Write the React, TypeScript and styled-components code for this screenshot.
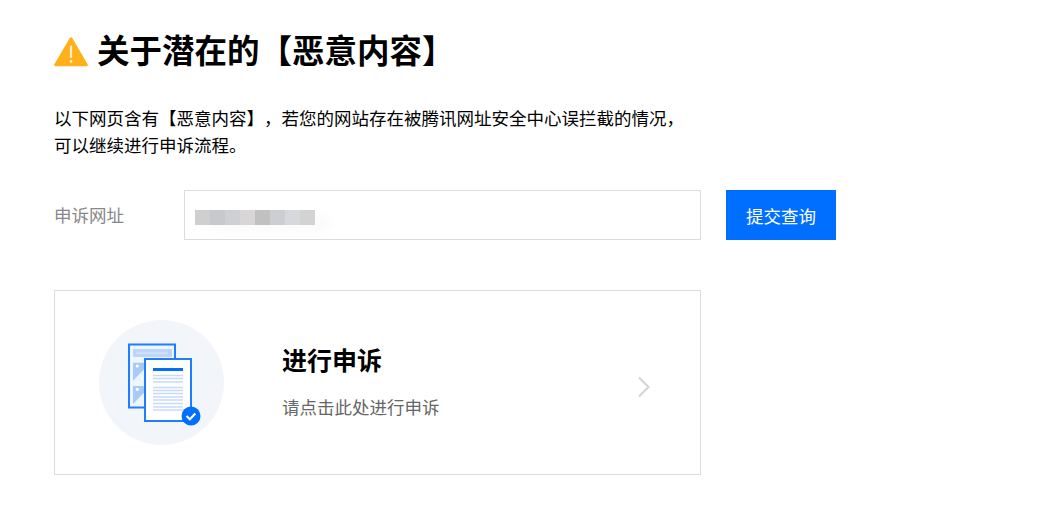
import { createGlobalStyle } from "styled-components";
import styled from "styled-components";

const GlobalStyle = createGlobalStyle`
  html, body {
    margin: 0;
    padding: 0;
    background: #fff;
    font-family: "Noto Sans CJK SC", "Liberation Sans", sans-serif;
    text-spacing-trim: space-all;
  }
`;

const Page = styled.div`
  width: 1052px;
  height: 528px;
  padding: 25px 0 0 54px;
  box-sizing: border-box;
  overflow: hidden;
`;

const Title = styled.h1`
  display: flex;
  align-items: center;
  gap: 9px;
  margin: 0;
  height: 48px;
  font-size: 32.5px;
  line-height: 48px;
  font-weight: 700;
  color: #000;
`;

const TitleIcon = styled.svg`
  margin-top: 6px;
`;

const Intro = styled.p`
  margin: 31px 0 0;
  width: 640px;
  font-size: 17.5px;
  line-height: 27px;
  color: #000;
`;

const QueryRow = styled.div`
  display: flex;
  align-items: stretch;
  height: 50px;
  margin-top: 32px;
`;

const Label = styled.label`
  width: 130px;
  font-size: 17.5px;
  line-height: 50px;
  color: #888;
`;

const UrlBox = styled.div`
  display: flex;
  align-items: center;
  width: 517px;
  box-sizing: border-box;
  padding: 4px 0 0 10px;
  border: 1px solid #dcdcdc;
`;

const Blurred = styled.div`
  display: flex;
  box-shadow: 16px 6px 12px rgba(0, 0, 0, 0.025);
`;

const Pixel = styled.span<{ $tone: string }>`
  width: 15px;
  height: 15px;
  background: ${(p) => p.$tone};
`;

const SubmitButton = styled.button`
  width: 110px;
  margin-left: 25px;
  padding: 0;
  border: 0;
  background: #006eff;
  color: #fff;
  font-family: inherit;
  font-size: 17.5px;
`;

const AppealCard = styled.a`
  display: flex;
  align-items: center;
  width: 647px;
  height: 185px;
  box-sizing: border-box;
  margin-top: 50px;
  padding-left: 44px;
  border: 1px solid #dcdcdc;
  cursor: pointer;
`;

const CardText = styled.div`
  flex: 1;
  margin: 0 0 6px 58px;
`;

const CardTitle = styled.div`
  font-size: 25px;
  line-height: 38px;
  font-weight: 700;
  color: #000;
`;

const CardHint = styled.div`
  margin-top: 16px;
  font-size: 17.5px;
  line-height: 26px;
  color: #666;
`;

const Chevron = styled.svg`
  margin: 8px 49px 0 0;
`;

const pixels = ["#cfcfcf", "#c8c9cd", "#cfd0d3", "#d8d6d6", "#c1c1c1", "#cdced3", "#d7d8dd", "#d3d3d3"];

const WarningIcon = () => (
  <TitleIcon width="34" height="32" viewBox="0 0 34 32">
    <path
      d="M17 2.5 32.5 29H1.5Z"
      fill="#ffb11b"
      stroke="#ffb11b"
      strokeWidth="2.6"
      strokeLinejoin="round"
    />
    <rect x="15.9" y="9.5" width="2.2" height="12.5" rx="1.1" fill="#fff0d2" />
    <circle cx="17" cy="25.4" r="1.4" fill="#fff0d2" />
  </TitleIcon>
);

const DocumentsIllustration = () => (
  <svg width="125" height="125" viewBox="0 0 125 125">
    <circle cx="62.5" cy="62.5" r="62.5" fill="#f2f5fa" />
    <rect x="30" y="24.5" width="46" height="63" fill="#eef5ff" stroke="#1f7dff" strokeWidth="2" />
    <rect x="34" y="29" width="39" height="8" fill="#bcd6fb" />
    <rect x="37.5" y="32.5" width="31" height="1.2" fill="#dbe9fd" />
    <path d="M34 42.7h11v6.6L34 60.7ZM34 66h11v6.7L34 84Z" fill="#a9c9f8" />
    <circle cx="38.3" cy="46" r="1.6" fill="#fff" />
    <circle cx="38.3" cy="69.3" r="1.6" fill="#fff" />
    <rect x="46" y="39" width="46" height="62" fill="#fff" stroke="#1f7dff" strokeWidth="2" />
    <rect x="54" y="48" width="30" height="3" fill="#006eff" />
    <path
      d="M54 55.5h30M54 58.5h30M54 62h30M54 67.5h30M54 70.5h30M54 73.5h30M54 77h30M54 80h30M54 83.5h30M54 87h30M54 90h30"
      stroke="#c5dbfb"
      strokeWidth="1.4"
    />
    <circle cx="92" cy="96" r="9.5" fill="#006eff" />
    <path d="m87.5 96 3.4 3.2 5.4-5.8" fill="none" stroke="#fff" strokeWidth="2.2" />
  </svg>
);

export default function App() {
  return (
    <Page>
      <GlobalStyle />
      <Title>
        <WarningIcon />
        关于潜在的【恶意内容】
      </Title>
      <Intro>
        以下网页含有【恶意内容】，若您的网站存在被腾讯网址安全中心误拦截的情况，
        可以继续进行申诉流程。
      </Intro>
      <QueryRow>
        <Label>申诉网址</Label>
        <UrlBox>
          <Blurred>
            {pixels.map((tone, i) => (
              <Pixel key={i} $tone={tone} />
            ))}
          </Blurred>
        </UrlBox>
        <SubmitButton>提交查询</SubmitButton>
      </QueryRow>
      <AppealCard>
        <DocumentsIllustration />
        <CardText>
          <CardTitle>进行申诉</CardTitle>
          <CardHint>请点击此处进行申诉</CardHint>
        </CardText>
        <Chevron width="14" height="22" viewBox="0 0 14 22">
          <path d="m2 1.5 9.5 9.5L2 20.5" fill="none" stroke="#d3d3d3" strokeWidth="2" />
        </Chevron>
      </AppealCard>
    </Page>
  );
}
